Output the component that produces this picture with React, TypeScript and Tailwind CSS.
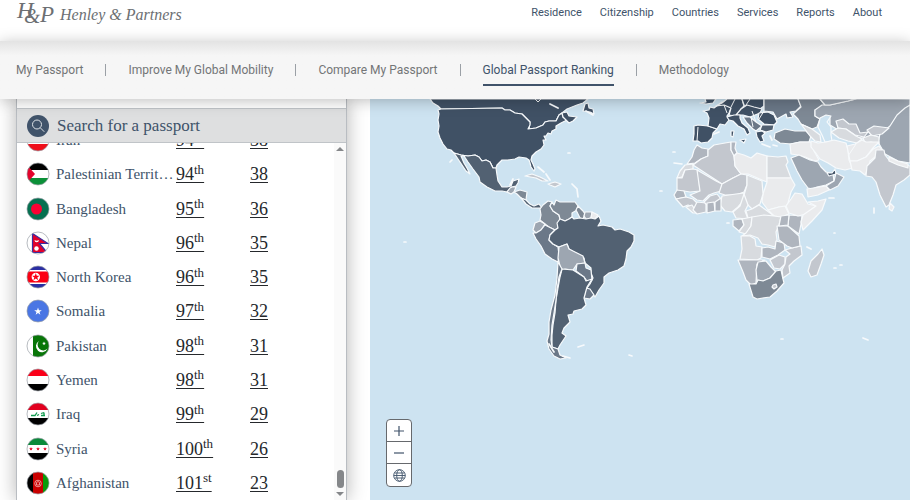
import React from "react";

type Shape = [string, string];

const NAVY = "#405165";
const SLATE = "#526172";
const STEEL = "#6b7888";
const MIST = "#7e8995";
const FOG = "#9da6b1";
const ASH = "#afb5be";
const SILVER = "#c3c7ce";
const PALE = "#d8dbdf";
const ICE = "#eaebed";
const WATER = "#cde3f1";

const shapes: Shape[] = [
  // North America
  [NAVY, "430,99 433,103 438,106 441,109 502,108 505,110 510,110 515,113 522,114 526,118 530,122 529,129 536,128 543,125 545,122 549,121 556,121 559,115 562,113 567,109 577,105 583,103 588,99"],
  [NAVY, "441,109 502,108 505,110 510,110 515,113 522,114 526,118 530,122 530,125 528,129 536,128 543,125 545,122 549,121 556,121 559,115 562,113 563,117 567,120 561,123 556,126 556,129 552,131 551,134 548,133 546,136 544,136 546,140 543,140 544,145 541,149 536,152 532,156 531,160 533,164 535,169 534,171 531,167 530,163 529,160 526,158 519,157 515,159 508,160 502,160 497,165 496,168 493,168 490,162 486,160 482,161 479,157 475,155 468,156 461,155 454,153 451,150 447,149 443,144 440,138 438,132 439,126 438,120 439,114 438,110"],
  [NAVY, "563,117 562,113 567,112 569,116 577,117 573,121 569,123 566,120"],
  [NAVY, "583,111 585,104 588,103 589,108 593,109 594,114 590,112"],
  [SLATE, "454,153 461,155 468,156 475,155 479,157 482,161 486,160 490,162 493,168 496,168 497,175 498,181 502,187 507,187 511,186 513,181 519,179 518,183 516,186 512,187 510,189 507,192 502,191 495,191 487,187 480,182 479,177 473,169 468,162 464,156 461,156 464,163 467,168 470,174 466,171 462,165 458,159"],
  [FOG, "507,192 510,188 512,187 516,187 514,192 511,194"],
  [MIST, "514,192 520,190 527,192 526,200 521,198 517,194"],
  [SLATE, "521,198 526,200 530,204 534,206 539,204 542,208 537,208 532,208 526,204"],
  [SILVER, "525,176 532,174 540,177 548,181 542,181 536,178"],
  [SILVER, "548,184 555,182 561,184 555,187 550,185"],
  // South America
  [MIST, "548,201 543,205 540,209 541,215 540,220 545,224 549,227 555,230 558,228 558,223 560,219 559,215 553,211 550,206 552,202"],
  [MIST, "552,202 554,205 556,200 560,202 567,202 575,202 578,206 577,210 572,213 572,217 569,219 565,221 560,219 559,215 553,211 550,206"],
  [MIST, "578,206 583,211 585,214 583,219 580,218 578,214 576,210"],
  [FOG, "585,212 592,212 591,218 586,219 584,216"],
  [ICE, "592,212 598,215 595,219 591,218"],
  [FOG, "535,223 540,221 545,224 541,230 536,233 533,230"],
  [STEEL, "533,233 536,233 541,230 545,225 549,227 555,230 550,235 549,240 553,244 558,247 559,255 558,262 552,259 545,254 541,246 536,239"],
  [SLATE, "560,219 565,221 569,219 572,217 574,219 580,218 586,219 591,218 595,219 599,216 601,221 598,226 603,225 612,227 615,230 620,229 629,232 634,235 634,241 631,247 627,251 626,259 624,266 618,270 609,273 604,277 604,283 599,290 595,297 593,294 587,288 590,284 593,278 591,273 591,268 585,263 584,258 577,254 569,249 567,244 559,247 553,244 549,240 550,235 555,230 558,228 557,223"],
  [FOG, "559,247 567,244 569,249 577,253 583,256 585,263 577,264 573,270 565,269 562,271 560,266 558,258"],
  [STEEL, "577,264 585,263 586,268 591,270 592,280 587,281 584,277 576,271"],
  [STEEL, "586,288 590,289 594,295 590,299 584,298"],
  [SLATE, "562,269 573,270 584,277 586,281 592,279 587,287 584,298 586,305 582,309 574,311 573,314 568,315 570,322 567,325 564,328 562,333 566,336 560,345 558,349 552,347 552,335 553,325 555,313 556,300 558,288 560,277"],
  [STEEL, "558,262 562,269 559,277 557,290 556,300 554,313 552,325 551,340 552,347 558,349 560,355 566,358 560,359 554,356 549,349 547,341 549,334 549,322 551,310 555,295 557,278"],
  // Europe
  [NAVY, "700,103 706,102 705,99 716,99 713,103 706,104"],
  [NAVY, "694,126 698,125 708,126 717,129 713,133 712,138 708,142 701,143 698,141 693,141 694,134"],
  [NAVY, "708,126 709,118 707,113 703,111 709,110 710,107 714,108 722,102 731,108 729,113 727,116 729,120 725,125 720,124 717,129"],
  [NAVY, "716,106 722,103 727,99 742,99 744,106 741,109 741,114 735,116 729,115 731,108 724,105"],
  [NAVY, "742,99 764,99 764,106 760,109 753,108 744,105"],
  [NAVY, "741,109 747,105 754,107 762,109 760,113 750,117 743,115 736,115"],
  [NAVY, "727,117 734,115 740,115 740,118 742,123 748,128 750,133 747,135 744,129 738,126 733,121 729,120"],
  [NAVY, "740,140 746,139 744,143"],
  [NAVY, "731,131 734,131 733,137 731,136"],
  [STEEL, "743,117 750,117 756,122 762,126 756,131 753,129 747,123"],
  [NAVY, "759,113 768,112 774,115 777,122 774,125 764,124 758,119"],
  [SLATE, "762,125 774,125 773,130 766,132 760,130"],
  [NAVY, "756,132 762,131 765,133 762,136 764,141 760,142 757,137"],
  [STEEL, "764,99 798,99 801,106 796,111 790,112 793,117 787,118 786,114 777,119 773,112 764,111"],
  [MIST, "798,99 820,99 825,105 815,110 815,116 820,119 817,127 812,129 801,124 798,119 793,114 801,107"],
  // Asia
  [FOG, "815,110 822,105 830,105 848,101 856,99 910,99 910,142 893,142 864,138 850,137 830,125 830,117 820,119 815,116"],
  [FOG, "820,99 856,99 848,101 830,105 825,105"],
  [FOG, "905,108 910,105 910,163 898,161 885,154 878,142 880,134 890,126 897,115"],
  [SILVER, "836,121 843,119 849,124 856,124 860,133 868,132 864,137 855,135 846,129 838,128"],
  [PALE, "831,132 838,128 846,129 856,136 862,139 857,143 848,141 839,138"],
  [SILVER, "867,130 874,126 889,128 882,134 872,136"],
  [PALE, "863,138 871,135 879,137 879,144 871,142 865,143"],
  [WATER, "820,118 826,115 831,116 827,122 831,127 831,135 832,141 825,142 822,135 818,127"],
  [MIST, "775,133 785,129 795,131 806,131 811,136 809,142 800,142 791,144 780,143 774,139"],
  [PALE, "801,124 812,129 820,135 821,142 815,141 810,136"],
  [ICE, "790,144 800,142 811,142 814,151 819,160 815,161 805,157 798,155 791,154"],
  [ICE, "811,141 818,143 826,142 834,140 846,143 848,150 849,160 853,168 845,170 836,168 828,163 820,159 815,152 811,147"],
  [ICE, "847,146 855,144 862,140 866,142 879,142 872,149 866,157 857,161 850,161"],
  [ICE, "850,161 857,161 866,157 873,149 879,146 882,150 875,157 870,161 869,167 865,175 860,171 852,170"],
  [FOG, "791,158 799,155 810,160 818,162 821,167 826,172 833,174 834,181 826,185 817,187 812,189 808,188 802,180 797,171"],
  [NAVY, "827,173 832,173 835,169 836,174 829,176"],
  [FOG, "836,173 844,177 838,186 830,190 826,186 834,181"],
  [ICE, "807,189 826,186 829,190 818,195 808,197"],
  [SILVER, "876,150 884,150 885,155 889,160 898,164 910,166 910,175 904,180 896,185 893,195 889,205 886,207 880,195 876,182 872,177 866,176 867,166 875,158"],
  [ICE, "889,157 898,161 908,164 908,168 898,165 889,161"],
  [ICE, "890,203 894,207 892,211 889,209"],
  // Africa
  [ASH, "697,145 702,148 708,149 708,156 701,159 695,163 687,164 692,157 694,150"],
  [PALE, "685,165 693,164 693,169 685,170 682,177 677,178 680,171"],
  [SILVER, "708,150 714,145 725,143 731,142 731,150 734,155 735,166 741,174 733,178 722,184 716,180 693,165 701,159 708,156"],
  [ASH, "731,142 736,142 735,148 737,153 734,156 731,150"],
  [ICE, "737,153 744,155 751,158 757,153 767,156 767,182 762,180 748,174 741,174 735,166 734,156"],
  [PALE, "767,156 778,157 786,156 788,162 786,165 791,178 767,178"],
  [ICE, "767,178 791,178 795,185 791,192 788,203 785,208 779,207 768,210 762,202 763,194 767,182"],
  [ICE, "768,210 779,207 785,206 789,214 781,217 774,216"],
  [SILVER, "677,178 682,178 685,170 693,169 698,170 700,191 690,192 684,191 677,191"],
  [SILVER, "697,170 716,181 722,184 721,191 714,193 709,195 703,201 697,200 690,195 700,191"],
  [SILVER, "722,184 733,178 741,174 747,175 747,185 744,192 736,195 725,195 719,193"],
  [PALE, "747,175 762,181 763,194 760,204 752,209 747,204 744,195 747,185"],
  [PALE, "722,196 736,194 744,193 744,200 738,207 732,212 725,211 720,205"],
  [ASH, "677,190 684,191 686,197 676,199 674,195"],
  [SILVER, "676,199 686,197 693,199 697,203 695,208 688,205 683,207"],
  [PALE, "686,207 692,205 697,213 693,213"],
  [SILVER, "697,202 706,203 706,212 697,214 693,210"],
  [SILVER, "704,202 710,196 717,194 721,199 717,202 707,205"],
  [ASH, "707,203 714,202 715,211 707,213"],
  [ASH, "715,202 721,198 721,211 715,211"],
  [PALE, "744,194 748,205 745,211 748,219 736,218 733,212 740,206"],
  [PALE, "746,211 752,209 759,205 766,210 774,216 763,216 755,218 748,218"],
  [ASH, "733,220 742,219 744,225 739,231 733,226"],
  [PALE, "742,219 752,217 751,226 746,234 739,232 744,225"],
  [PALE, "752,217 764,215 774,216 781,217 779,225 776,232 777,240 775,247 768,245 762,244 758,238 750,235 742,236 746,233 751,226"],
  [PALE, "741,236 750,236 755,239 756,246 762,247 761,258 757,260 740,259 742,249"],
  [ASH, "738,260 757,260 765,260 757,264 756,283 751,285 746,280 743,272"],
  [FOG, "758,262 766,261 771,267 776,272 770,278 763,281 757,280 756,270"],
  [MIST, "749,284 756,284 758,280 763,281 770,278 776,271 781,270 783,279 784,283 777,291 770,297 757,299 753,297"],
  [SILVER, "773,285 776,284 777,287 774,289 772,287"],
  [ASH, "762,248 768,247 775,249 776,241 784,243 785,250 778,255 770,259 762,257"],
  [SILVER, "770,260 779,255 785,257 785,264 780,269 774,268"],
  [SILVER, "785,250 792,248 801,246 802,255 794,261 789,266 790,273 783,278 782,270 785,264 786,257 790,254"],
  [ASH, "777,226 788,226 799,236 800,246 792,248 787,246 779,240"],
  [ASH, "789,215 802,216 801,224 799,234 788,226"],
  [ASH, "781,216 789,215 788,225 779,226"],
  [ICE, "795,193 802,194 808,204 816,206 806,214 798,216 789,213 786,206 791,199"],
  [ICE, "808,202 818,201 826,199 822,210 812,221 803,230 801,222 803,215 816,206"],
  [SILVER, "822,249 824,255 821,264 817,275 811,277 808,271 811,261 818,254"],
];

const islets = "M404,242h2 M450,162l2,-2 M568,153h2 M538,167l6,5 M546,174l4,6 M572,184l5,5 1,8 M578,347l6,-2 M629,355l3,1 M563,356l7,2 M674,163l8,1 M673,152h2 M660,191h2 M727,223h2 M807,247l4,2 M834,268h2 M840,265h2 M829,198l5,0 M834,233h1 M863,338l5,2 M781,339h2 M773,145l4,1 M762,144l8,3 M770,136l2,4 M714,134l5,-2 M510,185l3,-6 M550,104l8,4 M586,111l7,4 M549,344l5,8 M874,208v5 M555,212";

function WorldMap() {
  return (
    <svg className="block h-full w-full" viewBox="370 99 540 401" preserveAspectRatio="xMidYMin slice" role="img" aria-label="World map">
      <rect x="370" y="99" width="540" height="401" fill={WATER} />
      <g stroke="#f7fafc" strokeWidth="1.2" strokeLinejoin="round">
        {shapes.map(([fill, points], i) => (
          <polygon key={i} points={points} fill={fill} />
        ))}
      </g>
      <path d={islets} fill="none" stroke="#f7fafc" strokeWidth="1.7" strokeLinecap="round" />
      <path d="M698,127 L697,141 M724,105l3,8 M735,99l-4,8 M750,99l-4,6 M764,111l-5,8 M752,111l4,11 M535,99l3,3 3,-3 M751,117l2,10 M856,144l-8,12" fill="none" stroke="#f7fafc" />
    </svg>
  );
}

function Star({ x, y, r, fill }: { x: number; y: number; r: number; fill: string }) {
  const pts = Array.from({ length: 10 }, (_, i) => {
    const a = -Math.PI / 2 + (i * Math.PI) / 5;
    const q = i % 2 ? r * 0.4 : r;
    return `${x + q * Math.cos(a)},${y + q * Math.sin(a)}`;
  }).join(" ");
  return <polygon points={pts} fill={fill} />;
}

const bands = (a: string, b: string, c: string) => (
  <>
    <rect width="24" height="8" fill={a} />
    <rect y="8" width="24" height="8" fill={b} />
    <rect y="16" width="24" height="8" fill={c} />
  </>
);

const flags: Record<string, React.ReactNode> = {
  Iran: bands("#239f40", "#fff", "#ef0f1a"),
  Palestinian: (
    <>
      {bands("#000", "#fff", "#0b9038")}
      <path d="M0 2L9 12L0 22Z" fill="#e4032c" />
    </>
  ),
  Bangladesh: (
    <>
      <rect width="24" height="24" fill="#067050" />
      <circle cx="10.500" cy="12" r="5.500" fill="#fb0233" />
    </>
  ),
  Nepal: (
    <>
      <rect width="24" height="24" fill="#fff" />
      <path d="M6.500 2.500L22 12.500H13.500L21 21.500H6.500Z" fill="#e2002b" stroke="#3a2da0" strokeWidth="1.200" />
      <circle cx="10.500" cy="17.500" r="2.200" fill="#fff" />
      <path d="M8.500 9a2.200 2.200 0 0 0 4.400 0q-2.200 1.500-4.400 0" fill="#fff" />
    </>
  ),
  "North Korea": (
    <>
      <rect width="24" height="24" fill="#2a2ea3" />
      <rect y="5" width="24" height="14" fill="#fff" />
      <rect y="6.500" width="24" height="11" fill="#fb0012" />
      <circle cx="9.800" cy="12" r="4.200" fill="#fff" />
      <Star x={9.8} y={12} r={4} fill="#fb0012" />
    </>
  ),
  Somalia: (
    <>
      <rect width="24" height="24" fill="#4a76e4" />
      <Star x={12} y={12.5} r={4} fill="#fff" />
    </>
  ),
  Pakistan: (
    <>
      <rect width="24" height="24" fill="#fff" />
      <rect x="7" width="17" height="24" fill="#087608" />
      <path d="M13 7a6 6 0 1 0 8.500 7.500a5 5 0 1 1-8.500-7.500" fill="#fff" />
      <Star x={18} y={9.5} r={2} fill="#fff" />
    </>
  ),
  Yemen: bands("#fb0019", "#fff", "#000"),
  Iraq: (
    <>
      {bands("#e2001f", "#fff", "#000")}
      <path d="M5 13.500h4l2-3 M11 13.500l2-1 M15 13.500h4 M15 11.500l3-1 M18 10.500v3" stroke="#129b50" strokeWidth="1.300" fill="none" />
    </>
  ),
  Syria: (
    <>
      {bands("#0a8a3a", "#fff", "#000")}
      <Star x={5} y={12} r={2} fill="#e2001f" />
      <Star x={12} y={12} r={2} fill="#e2001f" />
      <Star x={19} y={12} r={2} fill="#e2001f" />
    </>
  ),
  Afghanistan: (
    <>
      <rect width="8" height="24" fill="#000" />
      <rect x="7" width="10" height="24" fill="#c90000" />
      <rect x="17" width="7" height="24" fill="#0a9c0a" />
      <circle cx="12" cy="12.500" r="3.300" fill="none" stroke="#f2b6b6" strokeWidth="0.800" />
      <path d="M10.500 14v-2.500l1.500-1l1.500 1V14Z" fill="none" stroke="#f2b6b6" strokeWidth="0.800" />
    </>
  ),
};

function Flag({ id }: { id: string }) {
  const clip = "clip-" + id.replace(" ", "-");
  return (
    <svg className="block size-6" viewBox="0 0 24 24" aria-hidden="true">
      <clipPath id={clip}>
        <circle cx="12" cy="12" r="11" />
      </clipPath>
      <g clipPath={`url(#${clip})`}>{flags[id]}</g>
      <circle cx="12" cy="12" r="11" fill="none" stroke="#9aa0a6" strokeOpacity="0.7" />
    </svg>
  );
}

const rows: [string, string, number, string, number][] = [
  ["Iran", "Iran", 94, "th", 38],
  ["Palestinian", "Palestinian Territory", 94, "th", 38],
  ["Bangladesh", "Bangladesh", 95, "th", 36],
  ["Nepal", "Nepal", 96, "th", 35],
  ["North Korea", "North Korea", 96, "th", 35],
  ["Somalia", "Somalia", 97, "th", 32],
  ["Pakistan", "Pakistan", 98, "th", 31],
  ["Yemen", "Yemen", 98, "th", 31],
  ["Iraq", "Iraq", 99, "th", 29],
  ["Syria", "Syria", 100, "th", 26],
  ["Afghanistan", "Afghanistan", 101, "st", 23],
];

const tabs = ["My Passport", "Improve My Global Mobility", "Compare My Passport", "Global Passport Ranking", "Methodology"];
const menu = ["Residence", "Citizenship", "Countries", "Services", "Reports", "About"];

export default function App() {
  return (
    <div className="flex h-screen flex-col overflow-hidden bg-white font-[Roboto,sans-serif] text-[#40536a]">
      <header className="flex h-[41px] shrink-0 items-start justify-between bg-white pr-7 pl-4">
        <a href="#" className="flex items-center gap-1 text-[#6c6f73]">
          <svg className="h-[30px] w-[40px]" viewBox="0 0 40 30" fill="currentColor" fontFamily="'Liberation Serif',serif" fontStyle="italic" aria-label="H&P">
            <text x="1" y="18" fontSize="23">H</text>
            <text x="8" y="23" fontSize="21">&amp;</text>
            <text x="24" y="22" fontSize="23">P</text>
          </svg>
          <span className="font-['Liberation_Serif',serif] text-base leading-[30px] italic">Henley &amp; Partners</span>
        </a>
        <nav className="flex gap-[18px] pt-[5px] text-[11px] leading-4">
          {menu.map((m) => (
            <a key={m} href="#">{m}</a>
          ))}
        </nav>
      </header>

      <nav className="relative z-10 flex h-[58px] shrink-0 items-center bg-[#f6f6f6] bg-linear-to-b from-[#e3e3e3] to-[#f6f6f6] to-25% px-4 text-[12px] text-[#737577] shadow-[0_2px_14px_rgba(0,0,0,0.25)]">
        {tabs.map((t, i) => (
          <React.Fragment key={t}>
            {i > 0 && <span className="mx-[22px] h-3 w-px bg-[#9ba0a6]" />}
            <a
              href="#"
              className={i === 3 ? "border-b-2 border-[#40536a] pt-[6px] pb-1 leading-5 text-[#40536a]" : "leading-5"}
            >
              {t}
            </a>
          </React.Fragment>
        ))}
      </nav>

      <main className="flex min-h-0 flex-1">
        <section className="flex w-[370px] shrink-0 pr-[23px] pl-4">
          <div className="flex flex-1 flex-col border-x border-[#b9bdc2] bg-white shadow-[0_0_18px_rgba(0,0,0,0.3)]">
            <label className="mt-[9px] flex h-[35px] shrink-0 items-center gap-2 border-y border-[#c0c4c8] bg-[#dedfe0] pl-[10px]">
              <svg className="size-[22px] shrink-0" viewBox="0 0 22 22" fill="none" stroke="#dfe3e7" aria-hidden="true">
                <circle cx="11" cy="11" r="11" fill="#40536a" stroke="none" />
                <circle cx="10" cy="9.500" r="4.500" />
                <path d="M13.500 13L17 16.500" strokeLinecap="round" />
              </svg>
              <input
                type="text"
                aria-label="Search for a passport"
                placeholder="Search for a passport"
                className="min-w-0 flex-1 bg-transparent font-['Liberation_Serif',serif] text-[17px] leading-6 outline-none placeholder:text-[#40536a]"
              />
            </label>
            <div className="flex min-h-0 flex-1">
              <div className="min-w-0 flex-1 overflow-hidden">
                <table aria-label="Passport ranking" className="-mt-5 h-[calc(100%+20px)] w-full table-fixed border-collapse font-['Liberation_Serif',serif]">
                  <tbody>
                    {rows.map(([id, name, rank, suffix, score]) => (
                      <tr key={id}>
                        <td className="w-[39px] p-0 pl-[9px]">
                          <Flag id={id} />
                        </td>
                        <th scope="row" className="w-[120px] truncate p-0 text-left text-[15px] leading-6 font-normal">
                          {name}
                        </th>
                        <td className="w-[74px] p-0 text-lg leading-6 text-[#25282c]">
                          <a href="#" className="underline decoration-1 underline-offset-2">
                            {rank}
                            <sup className="text-[13px] leading-none">{suffix}</sup>
                          </a>
                        </td>
                        <td className="p-0 text-lg leading-6 text-[#25282c]">
                          <a href="#" className="underline decoration-1 underline-offset-2">{score}</a>
                        </td>
                      </tr>
                    ))}
                  </tbody>
                </table>
              </div>
              <div aria-hidden="true" className="flex w-3 flex-col items-center bg-[#fafafa] py-1">
                <span className="border-x-4 border-b-4 border-x-transparent border-b-[#85878a]" />
                <span className="mt-auto mb-1 h-[18px] w-[7px] rounded-full bg-[#85878a]" />
                <span className="border-x-4 border-t-4 border-x-transparent border-t-[#85878a]" />
              </div>
            </div>
          </div>
        </section>

        <section className="relative min-w-0 flex-1">
          <WorldMap />
          <div className="absolute bottom-[13px] left-4 flex w-[26px] flex-col divide-y divide-[#66696d] rounded-sm border border-[#66696d] bg-white">
            <button aria-label="Zoom in" className="flex h-[22px] items-center justify-center">
              <svg className="size-[10px]" viewBox="0 0 10 10" stroke="#40536a" strokeWidth="1.200"><path d="M0 5H10M5 0V10" /></svg>
            </button>
            <button aria-label="Zoom out" className="flex h-[22px] items-center justify-center">
              <svg className="size-[10px]" viewBox="0 0 10 10" stroke="#40536a" strokeWidth="1.200"><path d="M0 5H10" /></svg>
            </button>
            <button aria-label="Whole world" className="flex h-[22px] items-center justify-center">
              <svg className="size-[13px]" viewBox="0 0 13 13" fill="none" stroke="#40536a" strokeWidth="0.900">
                <circle cx="6.500" cy="6.500" r="5.800" />
                <ellipse cx="6.500" cy="6.500" rx="2.800" ry="5.800" />
                <path d="M1.500 4H11.500M1.500 9H11.500M.7 6.500H12.300" />
              </svg>
            </button>
          </div>
        </section>
      </main>
    </div>
  );
}
